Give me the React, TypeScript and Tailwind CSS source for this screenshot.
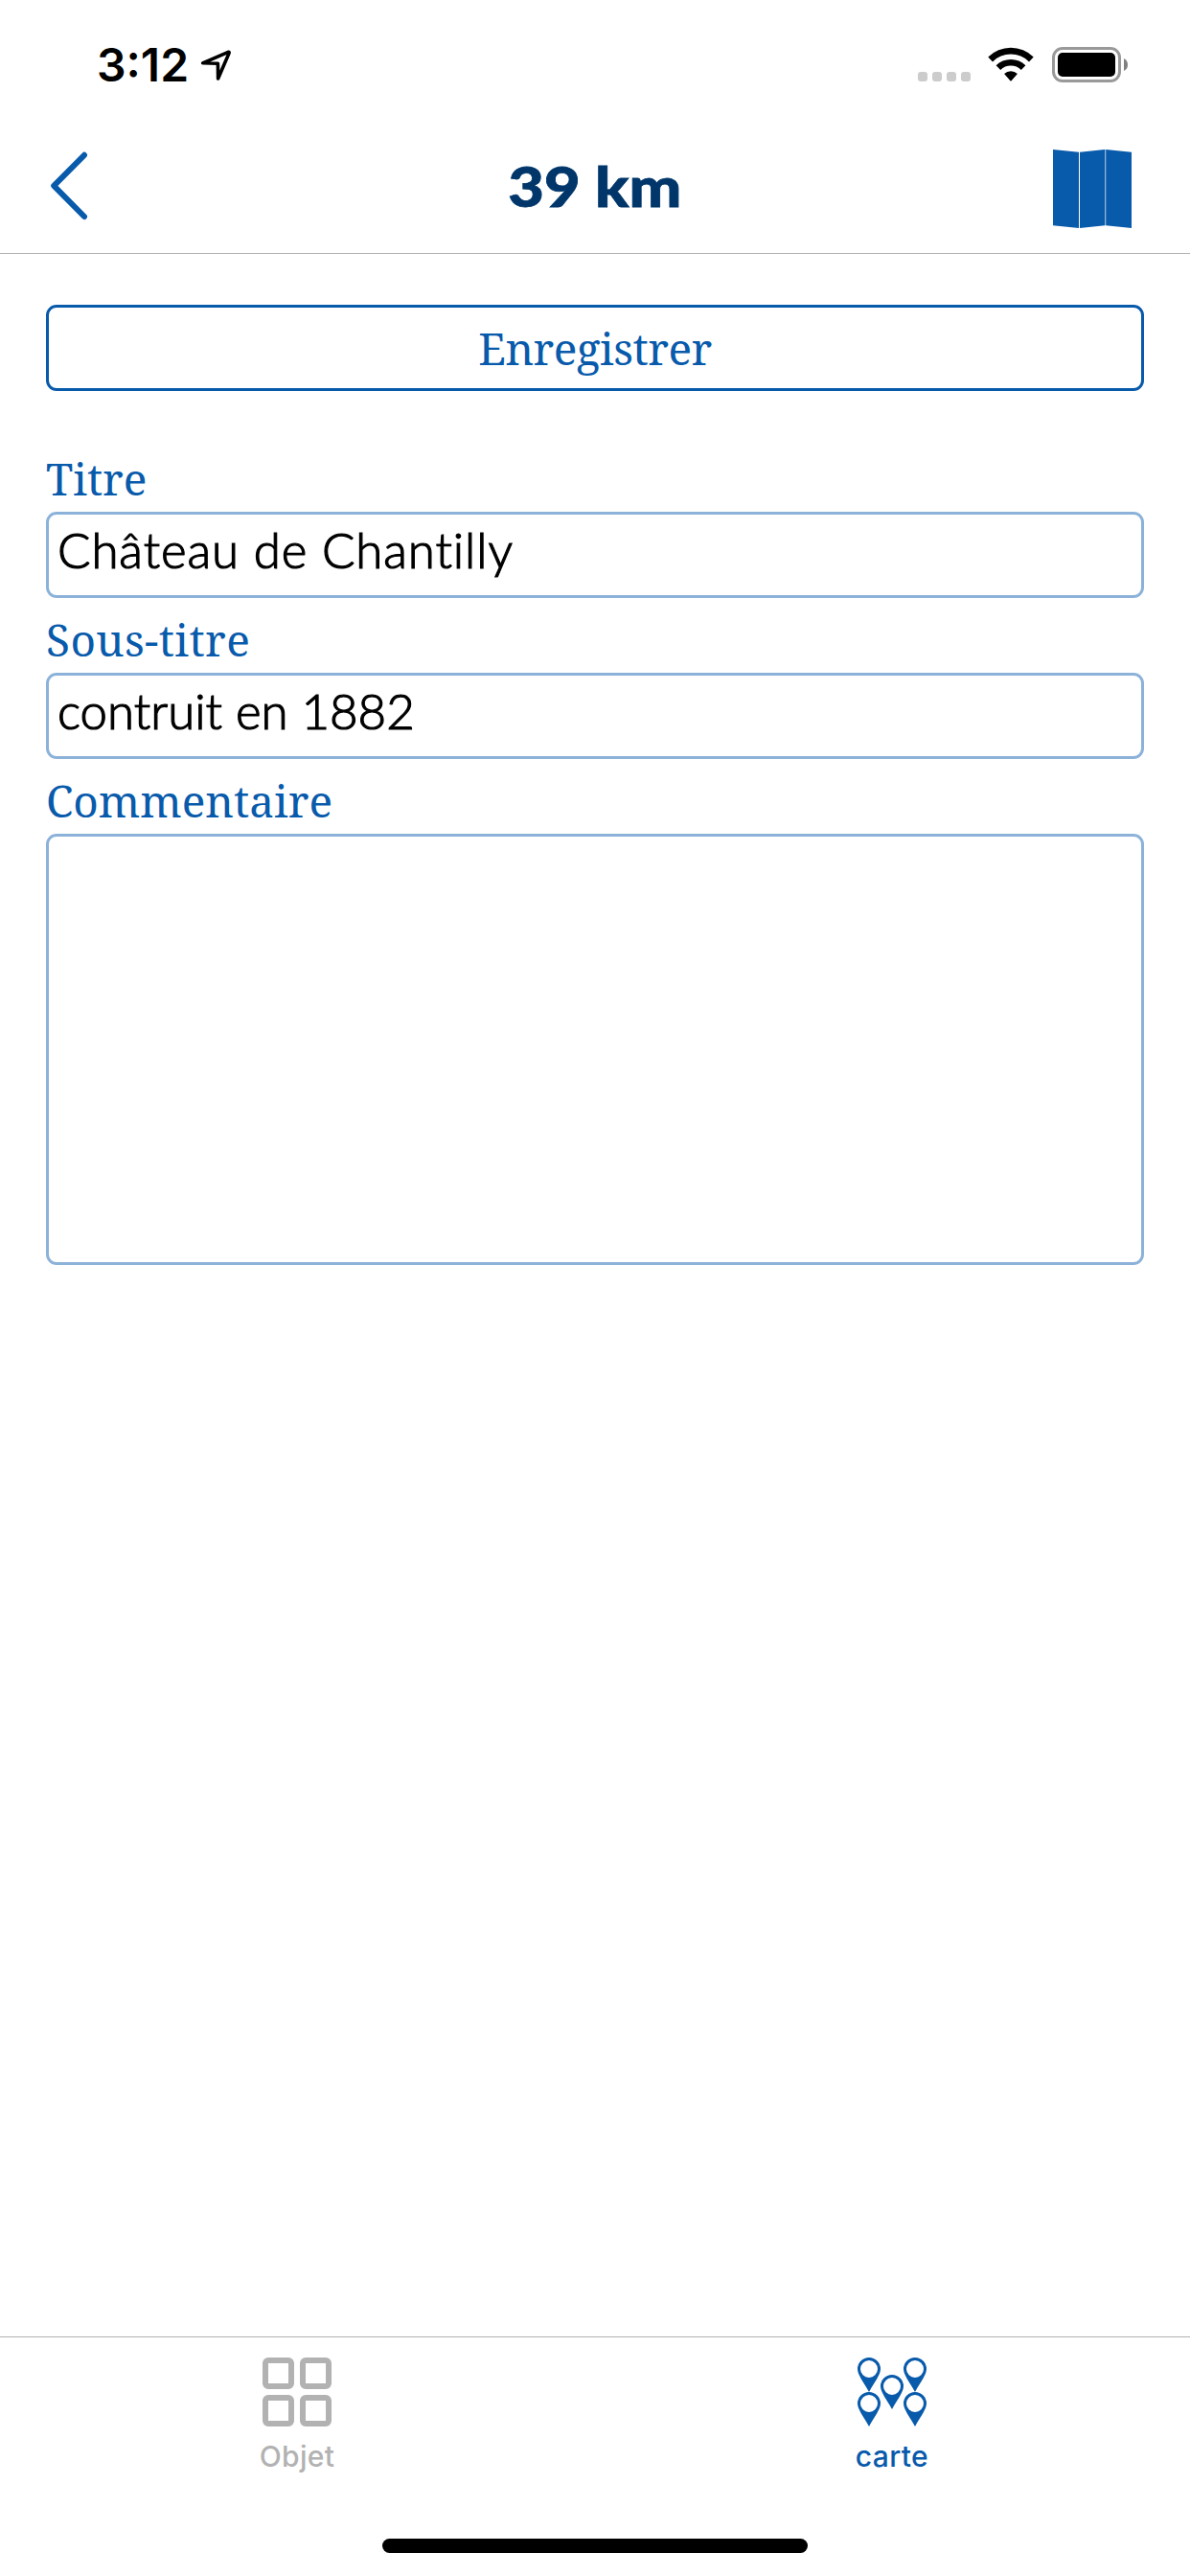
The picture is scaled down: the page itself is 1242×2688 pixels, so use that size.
import type { ReactNode } from 'react';

function StatusBar() {
  return (
    <div className="flex h-[132px] items-start justify-between pt-[49px] pr-[65px] pl-[101px]">
      <div className="flex items-start">
        <span className="h-[37px] font-['Inter',sans-serif] text-[48px] leading-[37px] font-semibold text-black">3:12</span>
        <svg width="36" height="36" viewBox="0 0 36 36" className="mt-[1px] ml-[11px]" aria-hidden="true">
          <path
            d="M3.6 15.8 L30.2 4.4 Q31.6 4.2 31 5.6 L19.6 32 L19.4 16.2 Z"
            fill="none"
            stroke="#000"
            strokeWidth="3.6"
            strokeLinejoin="round"
          />
        </svg>
      </div>
      <div className="flex items-start">
        <div className="mt-[26px] flex gap-[5px]">
          <i className="size-[10px] rounded-[3px] bg-[#cccccc]" />
          <i className="size-[10px] rounded-[3px] bg-[#cccccc]" />
          <i className="size-[10px] rounded-[3px] bg-[#cccccc]" />
          <i className="size-[10px] rounded-[3px] bg-[#cccccc]" />
        </div>
        <svg width="48" height="36" viewBox="0 0 48 36" className="ml-[18px]" aria-hidden="true">
          <path d="M0.3 10.6 A33.5 33.5 0 0 1 47.7 10.6 L43 15.4 A27 27 0 0 0 5 15.4 Z" />
          <path d="M8.6 19.2 A22 22 0 0 1 39.4 19.2 L34.8 24 A15.5 15.5 0 0 0 13.2 24 Z" />
          <path d="M17.1 28 A10 10 0 0 1 30.9 28 L24.6 35.2 Q24 35.9 23.4 35.2 Z" />
        </svg>
        <div className="ml-[19px] flex h-[37px] w-[72px] rounded-[11px] border-[3px] border-[#999999] p-[3px]">
          <div className="flex-1 rounded-[5px] bg-black" />
        </div>
        <svg width="4" height="13" viewBox="0 0 4 13" className="mt-[12px] ml-[3px]" aria-hidden="true">
          <path d="M0 0 Q4 2 4 6.5 T0 13 Z" fill="#808080" />
        </svg>
      </div>
    </div>
  );
}

function NavBar() {
  return (
    <div className="flex h-[133px] items-start justify-between border-b border-[#b2b2b2] pr-[61px] pl-[52px]">
      <svg width="138" height="74" viewBox="0 0 138 74" className="mt-[25px]" aria-hidden="true">
        <path d="M36 4.8 L4.2 36.8 L36 69" fill="none" stroke="#085aab" strokeWidth="6" strokeLinecap="round" strokeLinejoin="round" />
      </svg>
      <h1 className="mt-[22px] h-[78px] origin-center scale-x-112 font-['Lato',sans-serif] text-[58px] leading-[79px] font-black text-[#01366a] [-webkit-text-stroke:0.8px_#01366a]">
        39 km
      </h1>
      <div className="mt-[24px] flex w-[130px] justify-end">
        <svg width="82" height="82" viewBox="0 0 82 82" fill="#085aab" aria-hidden="true">
          <path d="M0 0 L27 2.8 V82 L0 79.2 Z" />
          <path d="M28 2.8 L54 0 V79.2 L28 82 Z" />
          <path d="M55.2 0 L82 2.8 V82 L55.2 79.2 Z" />
          <path d="M54 0 H55.2 V79.2 H54 Z" opacity="0.45" />
        </svg>
      </div>
    </div>
  );
}

function Label({ children }: { children: ReactNode }) {
  return (
    <div className="flex h-[78px] items-center pt-2 font-['Noto_Serif','Liberation_Serif',serif] text-[46px] leading-[62px] text-[#085aab]">
      {children}
    </div>
  );
}

function Field({ children }: { children: ReactNode }) {
  return (
    <div className="flex h-[90px] items-center rounded-[11px] border-[3px] border-[#8cb2d9] pb-[11px] pl-[9px] font-['Lato',sans-serif] text-[51px] leading-[62px] font-light text-black [-webkit-text-stroke:1.2px_#000]">
      {children}
    </div>
  );
}

function Square() {
  return <i className="size-[33px] rounded-[6px] border-[6px] border-[#b2b2b2]" />;
}

const pins = [
  [0, 0],
  [48, 0],
  [24, 18],
  [0, 36],
  [48, 36],
];

function PinsIcon() {
  return (
    <svg width="72" height="72" viewBox="0 0 72 72" fill="#085aab" fillRule="evenodd" aria-hidden="true">
      {pins.map(([x, y]) => (
        <path
          key={`${x}-${y}`}
          transform={`translate(${x} ${y})`}
          d="M12 0 A12 12 0 0 1 24 12 C24 18 18 25 12 36 C6 25 0 18 0 12 A12 12 0 0 1 12 0 Z M12 3 A9 9 0 1 0 12 21 A9 9 0 1 0 12 3 Z"
        />
      ))}
    </svg>
  );
}

function TabBar() {
  return (
    <nav className="flex h-[250px] flex-col border-t border-[#b2b2b2] font-['Inter',sans-serif] text-[30px] leading-[36px] font-medium">
      <div className="flex h-[210px] pt-[21px]">
        <div className="flex w-[620px] flex-col items-center text-[#b2b2b2]">
          <div className="grid grid-cols-2 gap-[6px]">
            <Square />
            <Square />
            <Square />
            <Square />
          </div>
          <span className="mt-[13px] tracking-[0.3px]">Objet</span>
        </div>
        <div className="flex flex-1 flex-col items-center text-[#085aab]">
          <PinsIcon />
          <span className="mt-[13px] tracking-[0.4px]">carte</span>
        </div>
      </div>
      <div className="h-[15px] w-[444px] self-center rounded-full bg-black" />
    </nav>
  );
}

export default function App() {
  return (
    <div className="flex h-[2688px] w-[1242px] flex-col overflow-hidden bg-white">
      <StatusBar />
      <NavBar />
      <main className="flex flex-1 flex-col px-[48px] pt-[53px]">
        <button className="mb-[48px] h-[90px] rounded-[11px] border-[3px] border-[#085aab] font-['Noto_Serif','Liberation_Serif',serif] text-[46px] leading-[84px] tracking-[-0.5px] text-[#085aab]">
          Enregistrer
        </button>
        <Label>Titre</Label>
        <Field>
          <span className="tracking-[0.9px]">Château de Chantilly</span>
        </Field>
        <Label>
          <span className="tracking-[0.4px]">Sous-titre</span>
        </Label>
        <Field>contruit en 1882</Field>
        <Label>Commentaire</Label>
        <div className="h-[450px] rounded-[11px] border-[3px] border-[#8cb2d9]" />
      </main>
      <TabBar />
    </div>
  );
}
